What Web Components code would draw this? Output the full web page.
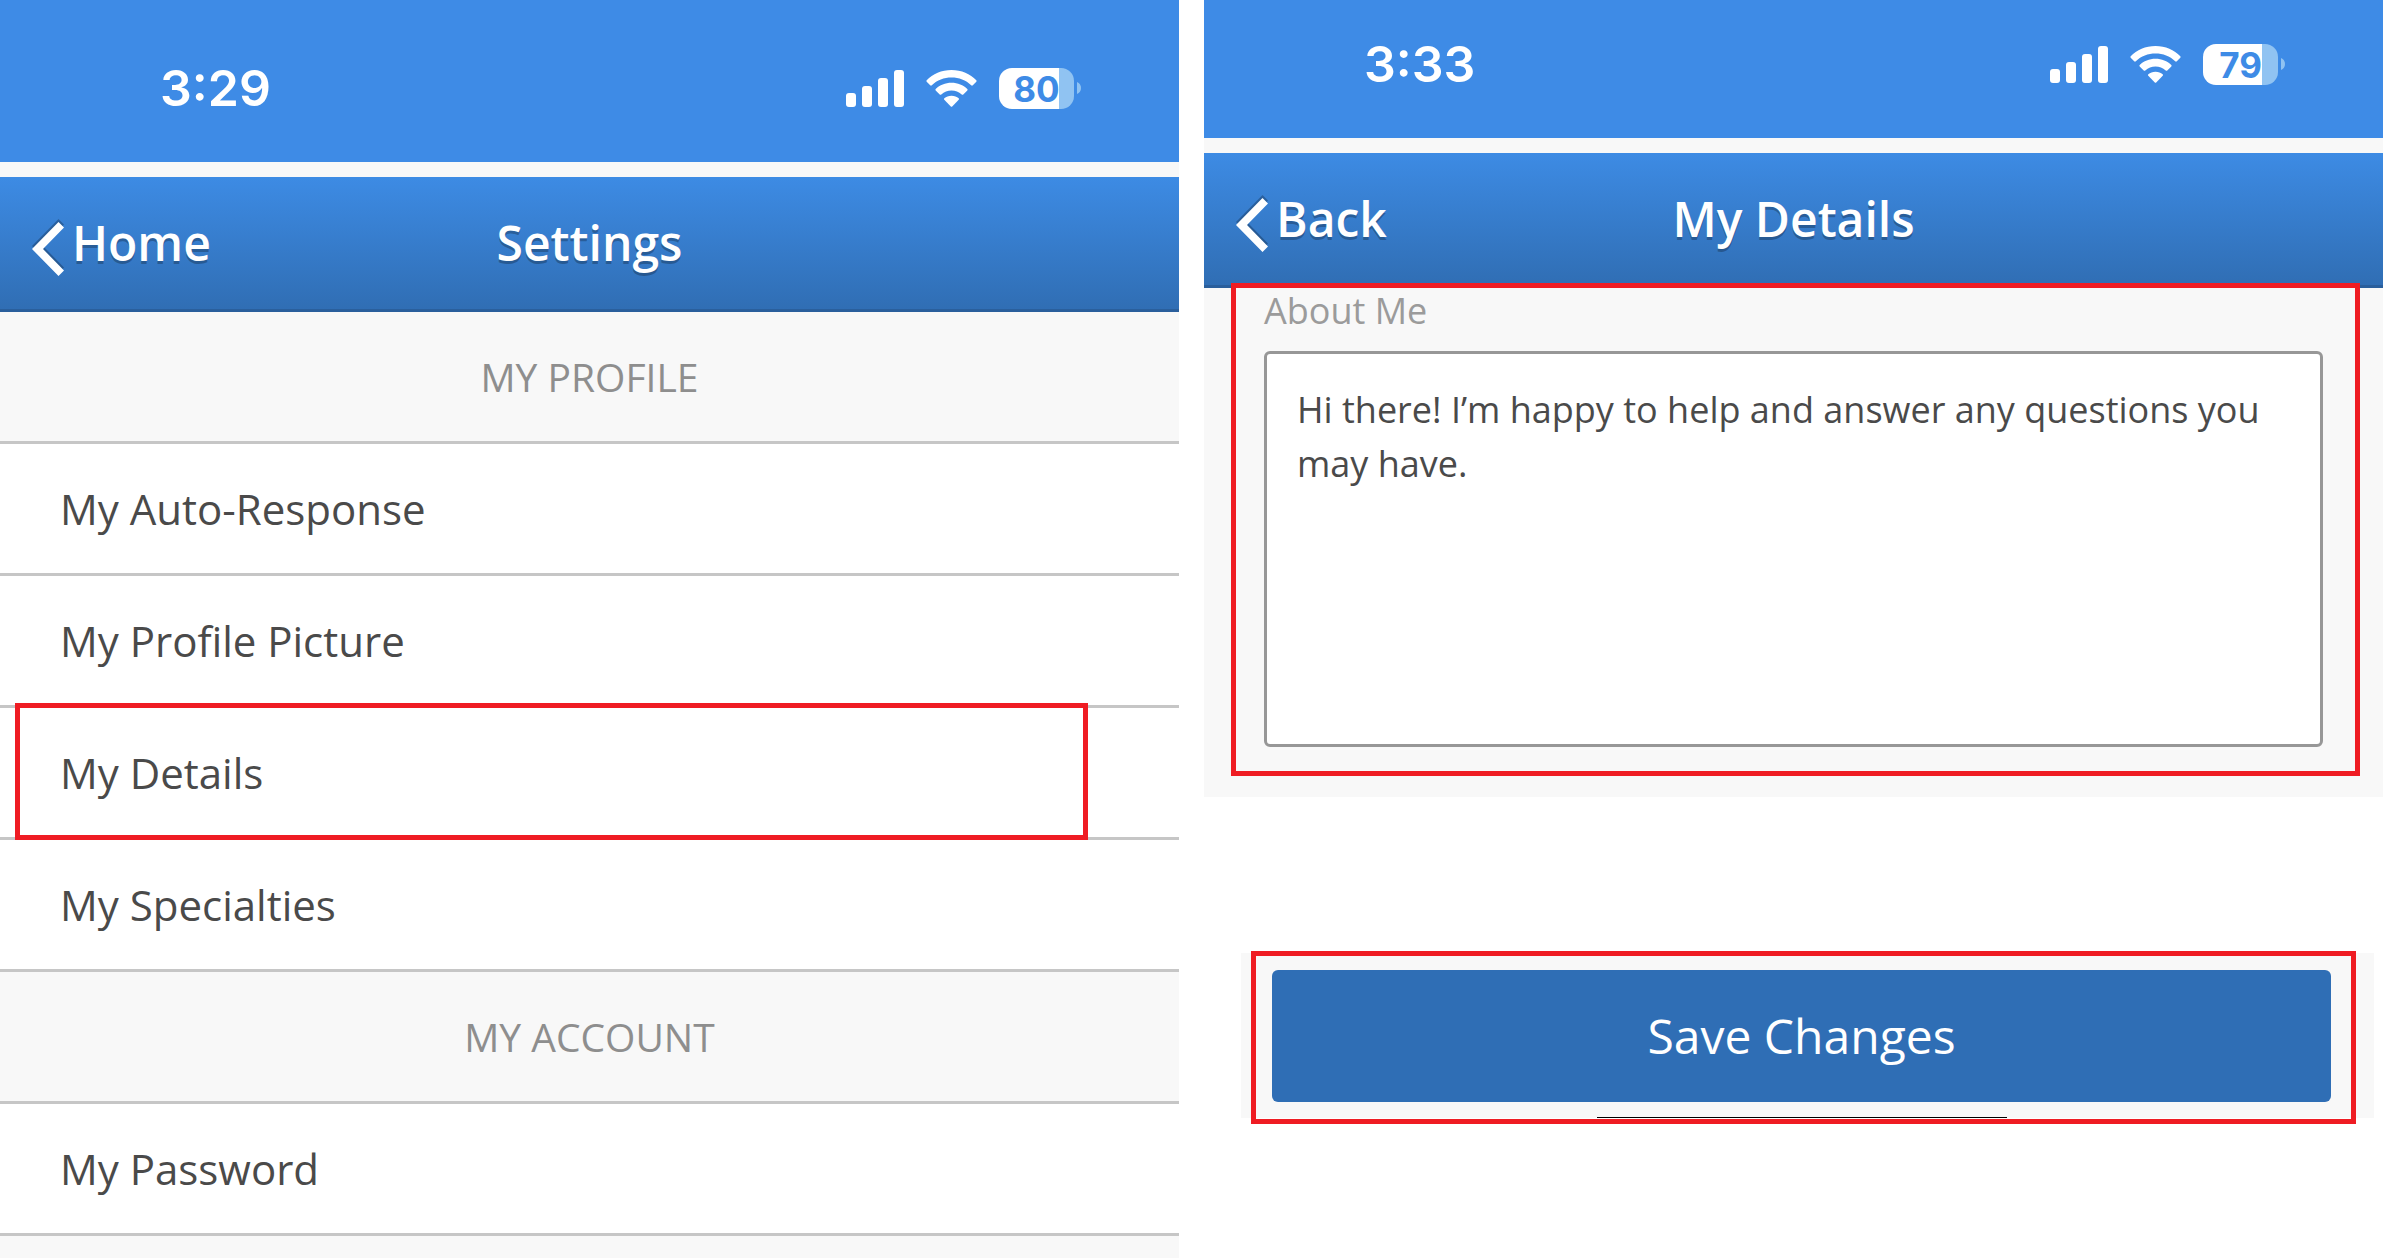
<!DOCTYPE html>
<html lang="en">
<head>
<meta charset="utf-8">
<meta name="viewport" content="width=device-width, initial-scale=1">
<title>Settings</title>
<style>
body {
  margin: 0;
  background: #fff;
  font-family: "Open Sans", "Noto Sans", sans-serif;
}

main {
  display: grid;
  grid-template-columns: 1fr 1fr;
  gap: 25px;
  min-height: 100vh;
  padding-right: 23px;
  box-sizing: border-box;
}
</style>
</head>
<body>

<main>
  <phone-screen fill>
    <status-bar time="3:29" battery="80" tall></status-bar>
    <nav-header back="Home">Settings</nav-header>
    <settings-section heading="My Profile">
      <settings-item>My Auto-Response</settings-item>
      <settings-item>My Profile Picture</settings-item>
      <settings-item marked>My Details</settings-item>
      <settings-item>My Specialties</settings-item>
    </settings-section>
    <settings-section heading="My Account">
      <settings-item>My Password</settings-item>
    </settings-section>
  </phone-screen>

  <phone-screen>
    <status-bar time="3:33" battery="79"></status-bar>
    <nav-header back="Back">My Details</nav-header>
    <about-field label="About Me">Hi there! I’m happy to help and answer any questions you may have.</about-field>
    <save-bar>Save Changes</save-bar>
  </phone-screen>
</main>

<script>
// phone-screen

class PhoneScreen extends HTMLElement {
  constructor() {
    super();
    this.attachShadow({mode: 'open'});
    this.shadowRoot.innerHTML = `
<style>
:host {
  display: flex;
  flex-direction: column;
  min-width: 0;
}

:host([fill]) {
  background: #f8f8f8;
}
</style>
<slot></slot>
`;
  }
}

customElements.define('phone-screen', PhoneScreen);


// status-bar

class StatusBar extends HTMLElement {
  constructor() {
    super();
    this.attachShadow({mode: 'open'});
    const time = this.getAttribute('time');
    const level = this.getAttribute('battery');
    this.shadowRoot.innerHTML = `
<style>
:host {
  display: flex;
  align-items: center;
  justify-content: space-between;
  padding: 42px 98px 52px 160px;
  background: #3e8be6;
  border-bottom: 15px solid #f8f8f8;
  color: #fff;
  font-family: Inter, "Liberation Sans", sans-serif;
}

:host([tall]) {
  padding-top: 66px;
}

.time {
  font-size: 50px;
  font-weight: 600;
  line-height: 44px;
}

.icons {
  display: flex;
  align-items: center;
}

.wifi {
  margin: 0 22px;
}

svg {
  display: block;
  fill: #fff;
}

.battery {
  width: 75px;
  height: 41px;
  border-radius: 13px;
  background: linear-gradient(to right, #fff ${level}%, #90c3f2 ${level}%);
  color: #3e8be6;
  font-size: 35px;
  font-weight: 700;
  line-height: 42px;
  text-align: center;
}

.cap {
  margin-left: 3px;
  fill: #90c3f2;
}
</style>
<span class="time">${time}</span>
<div class="icons">
  <svg width="58" height="37" viewBox="0 0 58 37" aria-hidden="true">
    <rect x="0" y="23" width="10" height="14" rx="3"/>
    <rect x="16" y="16" width="10" height="21" rx="3"/>
    <rect x="32" y="8" width="10" height="29" rx="3"/>
    <rect x="48" y="0" width="10" height="37" rx="3"/>
  </svg>
  <svg class="wifi" width="51" height="37" viewBox="0 0 51 37" aria-hidden="true">
    <path d="M25.500 0C35.500 0 44.200 4 50.300 10.200Q51 11 50.300 11.800L46.800 15.300Q46 16 45.200 15.300C39.800 10.200 33 7.600 25.500 7.600S11.200 10.200 5.800 15.300Q5 16 4.200 15.300L.7 11.800Q0 11 .7 10.200C6.800 4 15.500 0 25.500 0Z"/>
    <path d="M25.500 12.800C31.800 12.800 37.200 15.100 41.300 19Q42 19.800 41.300 20.500L37.300 24.500Q36.500 25.200 35.700 24.500C32.800 22 29.500 20.500 25.500 20.500S18.200 22 15.300 24.500Q14.500 25.200 13.700 24.500L9.700 20.500Q9 19.800 9.700 19C13.800 15.100 19.200 12.800 25.500 12.800Z"/>
    <path d="M25.500 25.800C28.500 25.800 30.800 26.800 32.700 28.300Q33.400 29 32.700 29.800L26.200 36.400Q25.500 37 24.800 36.400L18.300 29.800Q17.600 29 18.300 28.300C20.200 26.800 22.500 25.800 25.500 25.800Z"/>
  </svg>
  <div class="battery">${level}</div>
  <svg class="cap" width="4" height="12" viewBox="0 0 4 12" aria-hidden="true">
    <path d="M0 0C2.500 1 4 3.200 4 6S2.500 11 0 12Z"/>
  </svg>
</div>
`;
  }
}

customElements.define('status-bar', StatusBar);


// nav-header

class NavHeader extends HTMLElement {
  constructor() {
    super();
    this.attachShadow({mode: 'open'});
    this.shadowRoot.innerHTML = `
<style>
:host {
  display: grid;
  grid-template-columns: 1fr auto 1fr;
  align-items: center;
  padding: 0 32px;
  background: linear-gradient(#3d8be4, #306eb4);
  border-bottom: 3px solid #2a5f9c;
  color: #fff;
  font-size: 48px;
  font-weight: 600;
  line-height: 132px;
  text-shadow: 0 3px 0 rgba(0, 0, 0, 0.25);
}

a {
  display: flex;
  align-items: center;
  gap: 8px;
  color: inherit;
  text-decoration: none;
}

svg {
  fill: #fff;
  padding-top: 12px;
  filter: drop-shadow(0 -3px 0 rgba(0, 0, 0, 0.25));
}

h1 {
  margin: 0;
  font: inherit;
}
</style>
<a href="#">
  <svg width="32" height="54" viewBox="0 0 32 54" aria-hidden="true">
    <path d="M0 27 26.500 0 32 5.500 11 27 32 48.500 26.500 54Z"/>
  </svg>
  <span>${this.getAttribute('back')}</span>
</a>
<h1><slot></slot></h1>
`;
  }
}

customElements.define('nav-header', NavHeader);


// settings-section

class SettingsSection extends HTMLElement {
  constructor() {
    super();
    this.attachShadow({mode: 'open'});
    this.shadowRoot.innerHTML = `
<style>
:host {
  display: block;
}

h2 {
  margin: 0;
  padding-top: 1px;
  background: #f8f8f8;
  border-bottom: 3px solid #c6c6c6;
  color: #8e8e8e;
  font-size: 39px;
  font-weight: 400;
  line-height: 128px;
  text-align: center;
  text-transform: uppercase;
}
</style>
<h2>${this.getAttribute('heading')}</h2>
<slot></slot>
`;
  }
}

customElements.define('settings-section', SettingsSection);


// settings-item

class SettingsItem extends HTMLElement {
  constructor() {
    super();
    this.attachShadow({mode: 'open'});
    this.shadowRoot.innerHTML = `
<style>
:host {
  display: block;
  position: relative;
}

a {
  display: block;
  padding: 0 60px;
  background: #fff;
  border-bottom: 3px solid #c6c6c6;
  color: #4a4a4a;
  font-size: 42px;
  line-height: 129px;
  text-decoration: none;
}

/* red frame laid over the row */
:host([marked])::after {
  content: "";
  position: absolute;
  inset: -5px 91px 0 15px;
  border: 5px solid #ef1c23;
  pointer-events: none;
}
</style>
<a href="#"><slot></slot></a>
`;
  }
}

customElements.define('settings-item', SettingsItem);


// about-field

class AboutField extends HTMLElement {
  constructor() {
    super();
    this.attachShadow({mode: 'open'});
    this.shadowRoot.innerHTML = `
<style>
:host {
  display: flex;
  flex-direction: column;
  gap: 17px;
  position: relative;
  padding: 0 60px 50px;
  background: #f8f8f8;
  font-size: 36px;
}

:host::after {
  content: "";
  position: absolute;
  inset: -5px 23px 21px 27px;
  border: 5px solid #ef1c23;
  pointer-events: none;
}

label {
  color: #9b9b9b;
  line-height: 46px;
}

textarea {
  display: block;
  box-sizing: border-box;
  width: 100%;
  height: 396px;
  margin: 0;
  padding: 29px 30px;
  background: #fff;
  border: 3px solid #979797;
  border-radius: 6px;
  color: #4a4a4a;
  font: inherit;
  line-height: 54px;
  outline: none;
  overflow: hidden;
  resize: none;
}
</style>
<label for="about">${this.getAttribute('label')}</label>
<textarea id="about">${this.textContent.trim()}</textarea>
`;
  }
}

customElements.define('about-field', AboutField);


// save-bar

class SaveBar extends HTMLElement {
  constructor() {
    super();
    this.attachShadow({mode: 'open'});
    this.shadowRoot.innerHTML = `
<style>
:host {
  display: flex;
  flex-direction: column;
  gap: 15px;
  position: relative;
  margin: 156px 9px 0 37px;
  padding: 17px 43px 0 31px;
  background: #f8f8f8;
}

:host::after {
  content: "";
  position: absolute;
  inset: -2px 18px -6px 10px;
  border: 5px solid #ef1c23;
  pointer-events: none;
}

button {
  padding: 0;
  background: #2f6eb5;
  border: none;
  border-radius: 6px;
  color: #fff;
  cursor: pointer;
  font: inherit;
  font-size: 48px;
  line-height: 132px;
}

/* top edge of the home indicator */
.home {
  align-self: center;
  width: 410px;
  height: 1px;
  background: #000;
}
</style>
<button type="button"><slot></slot></button>
<div class="home"></div>
`;
  }
}

customElements.define('save-bar', SaveBar);
</script>
</body>
</html>
